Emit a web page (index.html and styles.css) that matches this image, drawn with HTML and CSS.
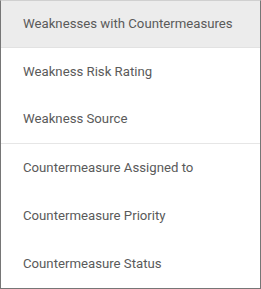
FILE: index.html
```html
<!DOCTYPE html>
<html lang="en">
<head>
    <meta charset="UTF-8">
    <meta name="viewport" content="width=device-width, initial-scale=1.0">
    <title>Column menu</title>
    <link rel="stylesheet" href="styles.css">
</head>
<body>
    <ul class="menu">
        <li class="menu-item active">Weaknesses with Countermeasures</li>
        <li class="menu-item">Weakness Risk Rating</li>
        <li class="menu-item group-end">Weakness Source</li>
        <li class="menu-item">Countermeasure Assigned to</li>
        <li class="menu-item">Countermeasure Priority</li>
        <li class="menu-item">Countermeasure Status</li>
    </ul>
</body>
</html>
```

FILE: styles.css
```css
body {
    margin: 0;
    font-family: Roboto, 'Liberation Sans', sans-serif;
    background-color: #ffffff;
}

.menu {
    list-style: none;
    margin: 0;
    padding: 0;
    width: 261px;
    height: 289px;
    box-sizing: border-box;
    background: #ffffff;
    border: 1px solid #767676;
    border-top-color: #d0d0d0;
}

.menu-item {
    height: 48px;
    box-sizing: border-box;
    display: flex;
    align-items: center;
    padding-left: 22px;
    padding-bottom: 2px;
    font-size: 13.2px;
    color: #5a5a5a;
}

.menu-item.active {
    height: 47px;
    background-color: #ececec;
    border-bottom: 1px solid #e2e2e2;
}

.menu-item.group-end {
    border-bottom: 1px solid #e6e6e6;
}
```
